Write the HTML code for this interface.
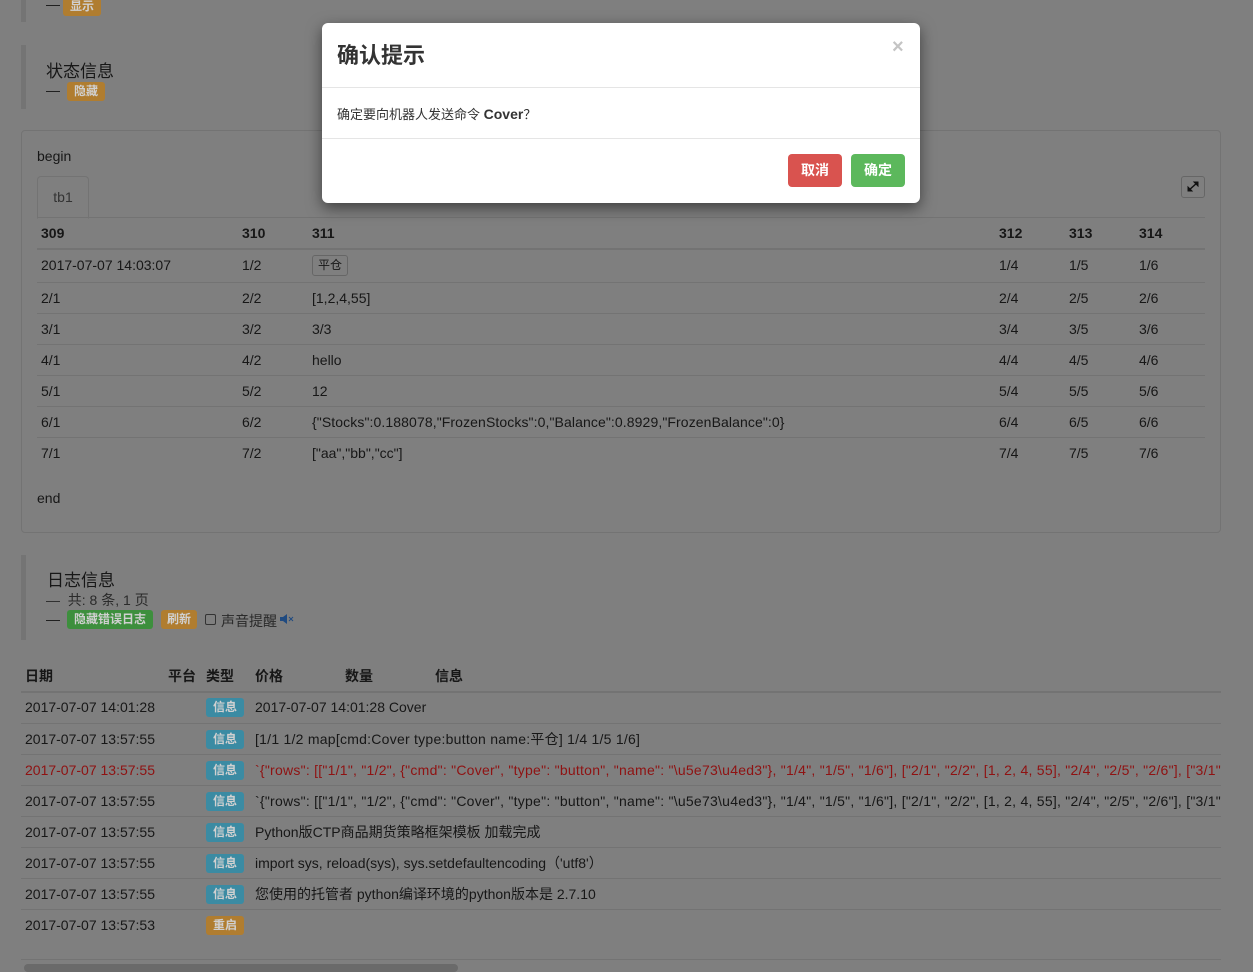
<!DOCTYPE html>
<html><head><meta charset="utf-8"><style>
*{box-sizing:border-box;margin:0;padding:0}
body{width:1253px;height:970px;overflow:hidden;background:#7f7f7f;font-family:"Liberation Sans","Noto Sans CJK SC",sans-serif;font-size:14px;color:#171717;position:relative}
.a{position:absolute;white-space:nowrap}
.bar{position:absolute;left:21px;width:5px;background:#747474}
.lbl{position:absolute;color:#d0d0d0;font-size:12px;font-weight:bold;border-radius:3px;text-align:center;line-height:19px;height:19px}
.or{background:#b07d30}.gr{background:#3d8f3d}.bl{background:#3b8ba3}
.hl{position:absolute;height:1px;background:#737373}
.c{position:absolute;white-space:nowrap;line-height:16px}
.w{letter-spacing:0.25px}
</style></head><body>
<div class="bar" style="top:0;height:22px"></div>
<div class="a" style="left:46px;top:-4px">—</div>
<div class="lbl or" style="left:63px;top:-3px;width:38px">显示</div>

<div class="bar" style="top:45px;height:64px"></div>
<div class="a" style="left:46px;top:57px;font-size:17px">状态信息</div>
<div class="a" style="left:46px;top:82px">—</div>
<div class="lbl or" style="left:67px;top:82px;width:38px">隐藏</div>

<div style="position:absolute;left:21px;top:130px;width:1200px;height:403px;border:1px solid #737373;border-radius:4px"></div>
<div class="a" style="left:37px;top:148px">begin</div>
<div style="position:absolute;left:37px;top:176px;width:52px;height:43px;border:1px solid #737373;border-bottom:1px solid #7f7f7f;border-radius:4px 4px 0 0;text-align:center;line-height:40px;color:#333;z-index:2">tb1</div>
<div class="hl" style="left:37px;top:217px;width:1168px"></div>
<div style="position:absolute;left:1181px;top:176px;width:24px;height:22px;border:1px solid #666;border-radius:3px">
<svg width="22" height="20" viewBox="0 0 22 20"><path d="M6 14 L16 5" stroke="#111" stroke-width="1.5"/><path d="M12 5 L16 5 L16 9Z M6 10 L6 14 L10 14Z" fill="#111" stroke="#111"/></svg></div>

<div style="font-weight:bold">
<div class="c" style="left:41px;top:225px">309</div><div class="c" style="left:242px;top:225px">310</div><div class="c" style="left:312px;top:225px">311</div><div class="c" style="left:999px;top:225px">312</div><div class="c" style="left:1069px;top:225px">313</div><div class="c" style="left:1139px;top:225px">314</div>
</div>
<div class="hl" style="left:37px;top:248px;width:1168px;height:2px"></div>
<div class="c" style="left:41px;top:257px">2017-07-07 14:03:07</div><div class="c" style="left:242px;top:257px">1/2</div>
<div class="a" style="left:312px;top:255px;width:36px;height:21px;border:1px solid #666;border-radius:3px;font-size:12px;text-align:center;line-height:19px">平仓</div>
<div class="c" style="left:999px;top:257px">1/4</div><div class="c" style="left:1069px;top:257px">1/5</div><div class="c" style="left:1139px;top:257px">1/6</div>
<div class="hl" style="left:37px;top:282px;width:1168px"></div>

<div class="c" style="left:41px;top:290px">2/1</div><div class="c" style="left:242px;top:290px">2/2</div><div class="c" style="left:312px;top:290px">[1,2,4,55]</div><div class="c" style="left:999px;top:290px">2/4</div><div class="c" style="left:1069px;top:290px">2/5</div><div class="c" style="left:1139px;top:290px">2/6</div>
<div class="hl" style="left:37px;top:313px;width:1168px"></div>
<div class="c" style="left:41px;top:321px">3/1</div><div class="c" style="left:242px;top:321px">3/2</div><div class="c" style="left:312px;top:321px">3/3</div><div class="c" style="left:999px;top:321px">3/4</div><div class="c" style="left:1069px;top:321px">3/5</div><div class="c" style="left:1139px;top:321px">3/6</div>
<div class="hl" style="left:37px;top:344px;width:1168px"></div>
<div class="c" style="left:41px;top:352px">4/1</div><div class="c" style="left:242px;top:352px">4/2</div><div class="c" style="left:312px;top:352px">hello</div><div class="c" style="left:999px;top:352px">4/4</div><div class="c" style="left:1069px;top:352px">4/5</div><div class="c" style="left:1139px;top:352px">4/6</div>
<div class="hl" style="left:37px;top:375px;width:1168px"></div>
<div class="c" style="left:41px;top:383px">5/1</div><div class="c" style="left:242px;top:383px">5/2</div><div class="c" style="left:312px;top:383px">12</div><div class="c" style="left:999px;top:383px">5/4</div><div class="c" style="left:1069px;top:383px">5/5</div><div class="c" style="left:1139px;top:383px">5/6</div>
<div class="hl" style="left:37px;top:406px;width:1168px"></div>
<div class="c" style="left:41px;top:414px">6/1</div><div class="c" style="left:242px;top:414px">6/2</div><div class="c w" style="left:312px;top:414px;letter-spacing:0.1px">{"Stocks":0.188078,"FrozenStocks":0,"Balance":0.8929,"FrozenBalance":0}</div><div class="c" style="left:999px;top:414px">6/4</div><div class="c" style="left:1069px;top:414px">6/5</div><div class="c" style="left:1139px;top:414px">6/6</div>
<div class="hl" style="left:37px;top:437px;width:1168px"></div>
<div class="c" style="left:41px;top:445px">7/1</div><div class="c" style="left:242px;top:445px">7/2</div><div class="c" style="left:312px;top:445px">["aa","bb","cc"]</div><div class="c" style="left:999px;top:445px">7/4</div><div class="c" style="left:1069px;top:445px">7/5</div><div class="c" style="left:1139px;top:445px">7/6</div>
<div class="c" style="left:37px;top:490px">end</div>

<div class="bar" style="top:555px;height:85px"></div>
<div class="a" style="left:47px;top:566px;font-size:17px">日志信息</div>
<div class="a" style="left:46px;top:590px;color:#2a2a2a">—&nbsp; 共: 8 条, 1 页</div>
<div class="a" style="left:46px;top:611px">—</div>
<div class="lbl gr" style="left:67px;top:610px;width:86px">隐藏错误日志</div>
<div class="lbl or" style="left:161px;top:610px;width:36px">刷新</div>
<div class="a" style="left:205px;top:614px;width:11px;height:11px;border:1px solid #333;border-radius:2px"></div>
<div class="a" style="left:221px;top:611px;color:#2a2a2a">声音提醒</div>
<svg class="a" style="left:280px;top:614px" width="14" height="10"><path d="M0 3h3l4-3v10l-4-3H0z" fill="#1f4a80"/><path d="M9 3l4 4M13 3l-4 4" stroke="#1f4a80" stroke-width="1"/></svg>

<div style="font-weight:bold">
<div class="c" style="left:25px;top:668px">日期</div><div class="c" style="left:168px;top:668px">平台</div><div class="c" style="left:206px;top:668px">类型</div><div class="c" style="left:255px;top:668px">价格</div><div class="c" style="left:345px;top:668px">数量</div><div class="c" style="left:435px;top:668px">信息</div>
</div>
<div class="hl" style="left:21px;top:691px;width:1200px;height:2px"></div>

<div style="position:absolute;left:0;top:0;width:1221px;height:970px;overflow:hidden">
<div class="c" style="left:25px;top:699px">2017-07-07 14:01:28</div><div class="lbl bl" style="left:206px;top:698px;width:38px">信息</div><div class="c" style="left:255px;top:699px">2017-07-07 14:01:28 Cover</div>
<div class="hl" style="left:21px;top:723px;width:1200px"></div>
<div class="c" style="left:25px;top:731px">2017-07-07 13:57:55</div><div class="lbl bl" style="left:206px;top:730px;width:38px">信息</div><div class="c w" style="left:255px;top:731px">[1/1 1/2 map[cmd:Cover type:button name:平仓] 1/4 1/5 1/6]</div>
<div class="hl" style="left:21px;top:754px;width:1200px"></div>
<div class="c" style="left:25px;top:762px;color:#8f1212">2017-07-07 13:57:55</div><div class="lbl bl" style="left:206px;top:761px;width:38px">信息</div><div class="c w" style="left:255px;top:762px;color:#8f1212">`{"rows": [["1/1", "1/2", {"cmd": "Cover", "type": "button", "name": "\u5e73\u4ed3"}, "1/4", "1/5", "1/6"], ["2/1", "2/2", [1, 2, 4, 55], "2/4", "2/5", "2/6"], ["3/1", "3/2"</div>
<div class="hl" style="left:21px;top:785px;width:1200px"></div>
<div class="c" style="left:25px;top:793px">2017-07-07 13:57:55</div><div class="lbl bl" style="left:206px;top:792px;width:38px">信息</div><div class="c w" style="left:255px;top:793px">`{"rows": [["1/1", "1/2", {"cmd": "Cover", "type": "button", "name": "\u5e73\u4ed3"}, "1/4", "1/5", "1/6"], ["2/1", "2/2", [1, 2, 4, 55], "2/4", "2/5", "2/6"], ["3/1", "3/2"</div>
<div class="hl" style="left:21px;top:816px;width:1200px"></div>
<div class="c" style="left:25px;top:824px">2017-07-07 13:57:55</div><div class="lbl bl" style="left:206px;top:823px;width:38px">信息</div><div class="c" style="left:255px;top:824px">Python版CTP商品期货策略框架模板 加载完成</div>
<div class="hl" style="left:21px;top:847px;width:1200px"></div>
<div class="c" style="left:25px;top:855px">2017-07-07 13:57:55</div><div class="lbl bl" style="left:206px;top:854px;width:38px">信息</div><div class="c" style="left:255px;top:855px">import sys, reload(sys), sys.setdefaultencoding（'utf8'）</div>
<div class="hl" style="left:21px;top:878px;width:1200px"></div>
<div class="c" style="left:25px;top:886px">2017-07-07 13:57:55</div><div class="lbl bl" style="left:206px;top:885px;width:38px">信息</div><div class="c" style="left:255px;top:886px">您使用的托管者 python编译环境的python版本是 2.7.10</div>
<div class="hl" style="left:21px;top:909px;width:1200px"></div>
<div class="c" style="left:25px;top:917px">2017-07-07 13:57:53</div><div class="lbl or" style="left:206px;top:916px;width:38px">重启</div>
<div class="hl" style="left:21px;top:959px;width:1200px"></div>
</div>
<div class="a" style="left:24px;top:964px;width:434px;height:8px;background:#6a6a6a;border-radius:4px"></div>

<div style="position:absolute;left:322px;top:23px;width:598px;height:180px;background:#fff;border-radius:6px;box-shadow:0 5px 15px rgba(0,0,0,.5)">
<div class="a" style="left:15px;top:15px;font-size:22px;font-weight:bold;color:#333">确认提示</div>
<div class="a" style="left:570px;top:13px;font-size:20px;font-weight:bold;color:#c4c4c4">×</div>
<div class="hl" style="left:0;top:64px;width:598px;background:#e5e5e5"></div>
<div class="a" style="left:15px;top:81px;font-size:13px;color:#333">确定要向机器人发送命令 <b style="font-size:14px">Cover</b>？</div>
<div class="hl" style="left:0;top:115px;width:598px;background:#e5e5e5"></div>
<div class="a" style="left:466px;top:131px;width:54px;height:33px;background:#d9534f;border-radius:4px;color:#fff;font-weight:bold;text-align:center;line-height:33px">取消</div>
<div class="a" style="left:529px;top:131px;width:54px;height:33px;background:#5cb85c;border-radius:4px;color:#fff;font-weight:bold;text-align:center;line-height:33px">确定</div>
</div>
</body></html>
